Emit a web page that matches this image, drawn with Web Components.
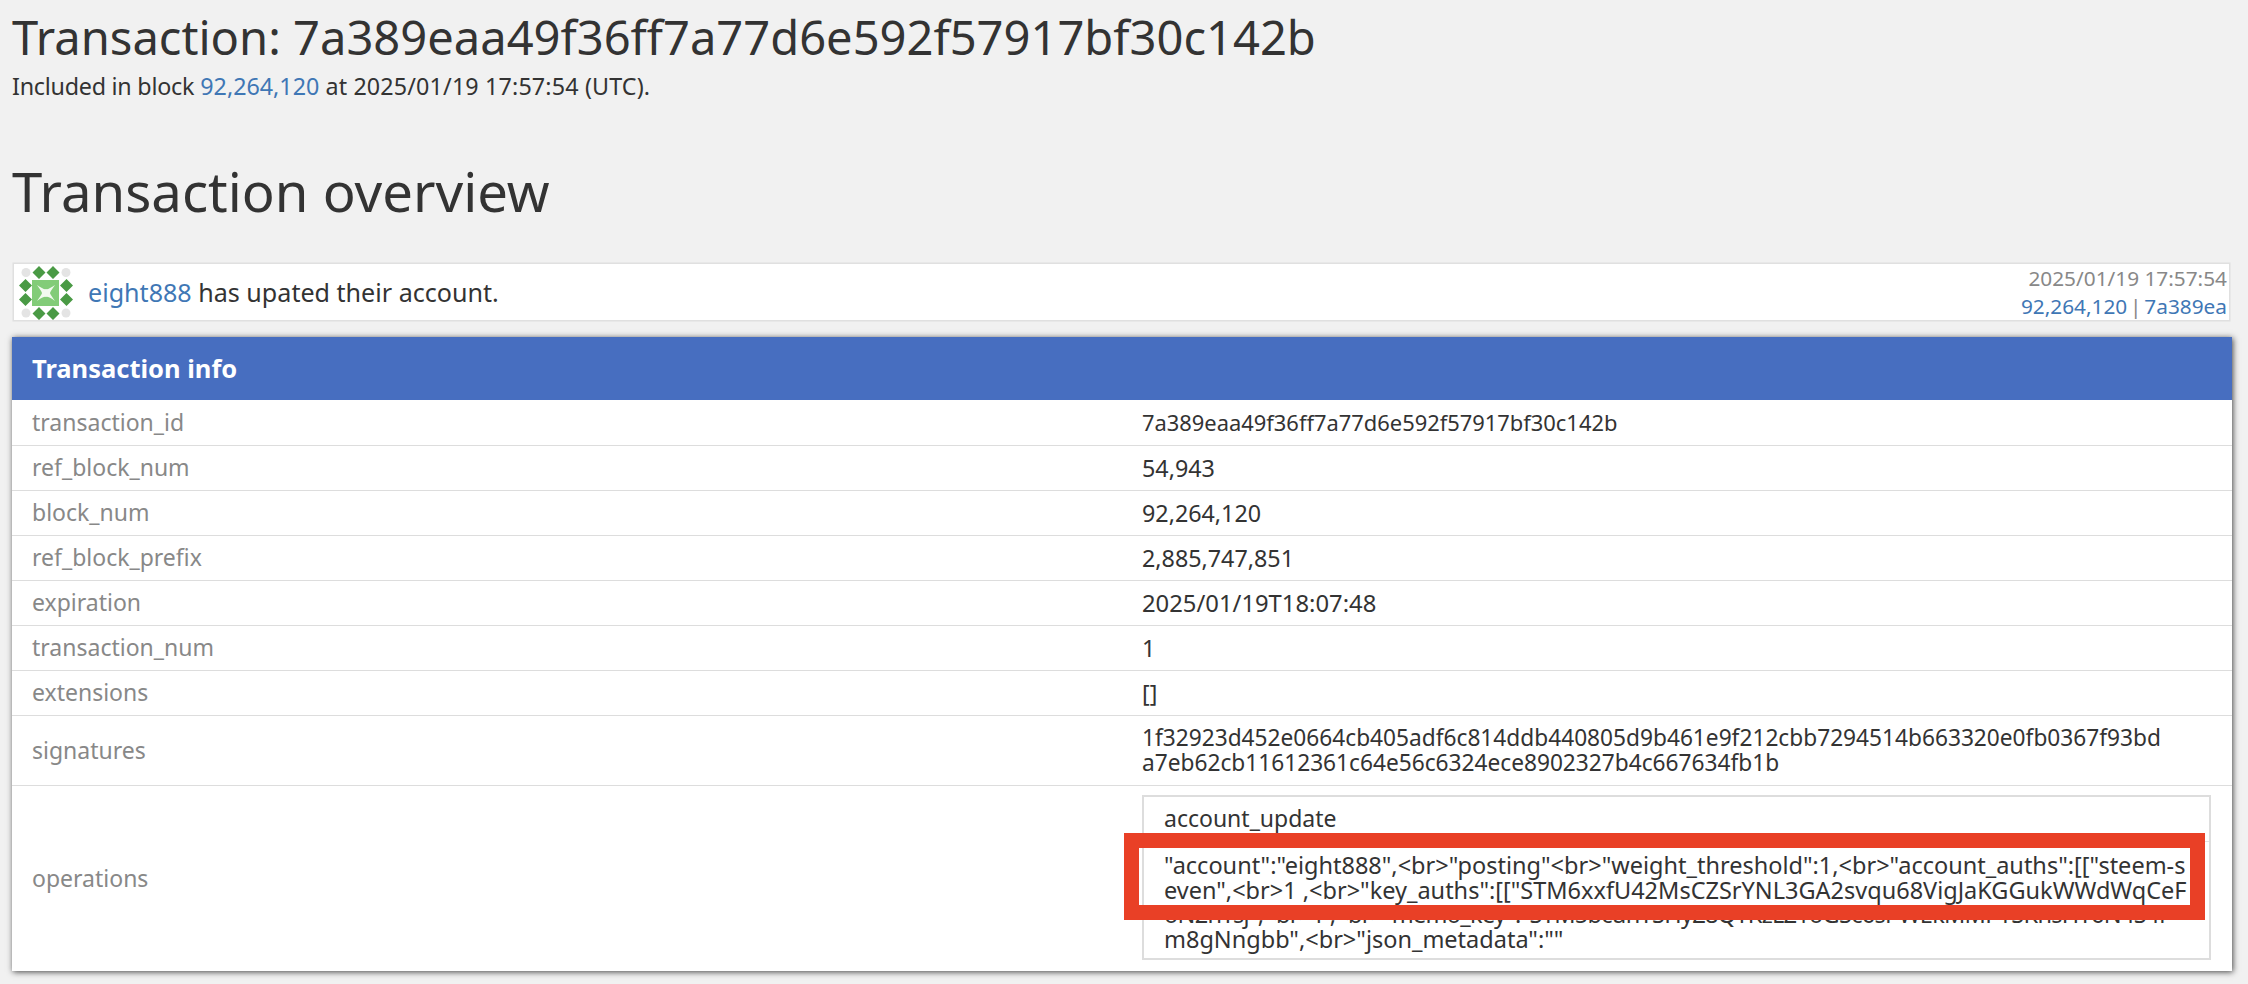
<!DOCTYPE html>
<html><head><meta charset="utf-8"><style>
html,body{margin:0;background:#f1f1f1;height:984px;overflow:hidden}
body{color:#333;padding:0 16px 0 12px;box-sizing:border-box;font-family:"Noto Sans","Open Sans",sans-serif}
</style></head><body>
<tx-page></tx-page>
<script>
class TxCard extends HTMLElement{constructor(){super();this.attachShadow({mode:'open'}).innerHTML=`<style>
:host{display:flex;align-items:center;justify-content:space-between;margin:0 3px 0 2px;height:56px;background:#fff;box-shadow:0 0 0 1.500px #e0e0e0;padding:0 2px 0 5px;font-size:25.100px}
.l{display:flex;align-items:center;gap:15px}
svg{width:54px;height:54px;display:block;margin-top:2px}
a{color:#3f77b5}
.r{text-align:right;font-size:20.800px;line-height:28px;color:#888}
.links{word-spacing:-2.600px}
</style><div class="l"><svg viewBox="0 0 54 54"><g fill="#e4e4e4"><circle cx="7" cy="6.500" r="4.500"/><circle cx="47" cy="6.500" r="4.500"/><circle cx="7" cy="47" r="4.500"/><circle cx="47" cy="47" r="4.500"/></g><g fill="#4a9a45"><path d="M20 0l6.500 6.500L20 13l-6.500-6.500zM34 0l6.500 6.500L34 13l-6.500-6.500zM20 41l6.500 6.500L20 54l-6.500-6.500zM34 41l6.500 6.500L34 54l-6.500-6.500zM6.500 13l6.500 6.500L6.500 26 0 19.500zM6.500 27l6.500 6.500L6.500 40 0 33.500zM47.500 13l6.500 6.500-6.500 6.500-6.500-6.500zM47.500 27l6.500 6.500-6.500 6.500-6.500-6.500z"/></g><path fill="#82cc78" d="M13 14h27v26H13z"/><path fill="#f2faf0" d="M18 19Q25 24 27 23Q29 24 36 19Q31 26 31 27Q31 28 36 35Q29 30 27 31Q25 30 18 35Q23 28 23 27Q23 26 18 19z"/></svg><div><a>eight888</a> has upated their account.</div></div><div class="r"><div>2025/01/19 17:57:54</div><div class="links"><a>92,264,120</a> | <a>7a389ea</a></div></div>`}}
class TxRow extends HTMLElement{constructor(){super();this.attachShadow({mode:'open'}).innerHTML=`<style>
:host{display:grid;grid-template-columns:1130px minmax(0,1fr);align-items:center;border-top:1px solid #ddd;line-height:24px;padding:10px 0}
.k{padding:0 0 2px 20px;line-height:22px;color:#888;font-size:23px}
.v{padding-right:21px;color:#333;white-space:nowrap;font-size:var(--fs,23.300px)}
</style><div class="k"><slot name="k"></slot></div><div class="v"><slot></slot></div>`}}
class TxOps extends HTMLElement{constructor(){super();this.attachShadow({mode:'open'}).innerHTML=`<style>
:host{display:block;border:2px solid #ddd;background:#fff;margin:-1px 0 1px;font-size:23.500px}
.h{height:44px;line-height:42px;padding:0 20px;border-bottom:1px solid #e3e3e3;font-size:23px}
.b{padding:11px 20px 7px;line-height:24.500px}
</style><div class="h">account_update</div><div class="b"><slot></slot></div>`}}
class TxPanel extends HTMLElement{constructor(){super();this.attachShadow({mode:'open'}).innerHTML=`<style>
:host{display:block;background:#fff;box-shadow:1px 1px 6px 0 #444;margin-top:17px}
.h{height:63px;background:#476ec0;color:#fff;font-weight:700;font-size:25.500px;line-height:63px;padding-left:20px}
::slotted(tx-row:first-of-type){border-top-color:transparent}
</style><div class="h">Transaction info</div><slot></slot>`}}
class TxPage extends HTMLElement{constructor(){super();this.attachShadow({mode:'open'}).innerHTML=`<style>
:host{display:block}
h1{font-weight:400;margin:0;font-size:47.100px;line-height:50px;padding-top:12px}
p{margin:0;font-size:23.300px;line-height:28px;padding-top:10px}
.pre{letter-spacing:-.240px}.post{letter-spacing:.150px}
a{color:#3f77b5}
h2{font-weight:400;margin:0;font-size:54.500px;line-height:62px;padding-top:60px;margin-bottom:42px}
.mark{position:absolute;left:1124px;top:833px;width:1051px;height:57px;border:15px solid #e94026;pointer-events:none}
.sig{display:block;line-height:24.500px}
.tight{letter-spacing:-.700px}
</style>
<h1>Transaction: 7a389eaa49f36ff7a77d6e592f57917bf30c142b</h1>
<p><span class="pre">Included in block</span> <a>92,264,120</a> <span class="post">at 2025/01/19 17:57:54 (UTC).</span></p>
<h2>Transaction overview</h2>
<tx-card></tx-card>
<tx-panel>
<tx-row style="--fs:21.900px"><span slot="k">transaction_id</span>7a389eaa49f36ff7a77d6e592f57917bf30c142b</tx-row>
<tx-row><span slot="k">ref_block_num</span>54,943</tx-row>
<tx-row><span slot="k">block_num</span>92,264,120</tx-row>
<tx-row><span slot="k">ref_block_prefix</span>2,885,747,851</tx-row>
<tx-row style="--fs:23.800px"><span slot="k">expiration</span>2025/01/19T18:07:48</tx-row>
<tx-row><span slot="k">transaction_num</span>1</tx-row>
<tx-row><span slot="k">extensions</span>[]</tx-row>
<tx-row style="--fs:22.700px"><span slot="k">signatures</span><span class="sig">1f32923d452e0664cb405adf6c814ddb440805d9b461e9f212cbb7294514b663320e0fb0367f93bd<br>a7eb62cb11612361c64e56c6324ece8902327b4c667634fb1b</span></tx-row>
<tx-row><span slot="k">operations</span><tx-ops>"account":"eight888",&lt;br&gt;"posting"&lt;br&gt;"weight_threshold":1,&lt;br&gt;"account_auths":[["steem-s<br>even",&lt;br&gt;1 ,&lt;br&gt;"key_auths":[["STM6xxfU42MsCZSrYNL3GA2svqu68VigJaKGGukWWdWqCeF<br><span class="tight">oN2hYsj",&lt;br&gt;1 ,&lt;br&gt;"memo_key":"STM5bcuhYSHyZ8QYKzLZ1oGSc6sPWEkMMPYSKhsHY6N4S4f</span><br>m8gNngbb",&lt;br&gt;"json_metadata":""</tx-ops></tx-row>
</tx-panel>
<div class="mark"></div>`}}
customElements.define('tx-card',TxCard);customElements.define('tx-row',TxRow);customElements.define('tx-ops',TxOps);customElements.define('tx-panel',TxPanel);customElements.define('tx-page',TxPage);
</script></body></html>
